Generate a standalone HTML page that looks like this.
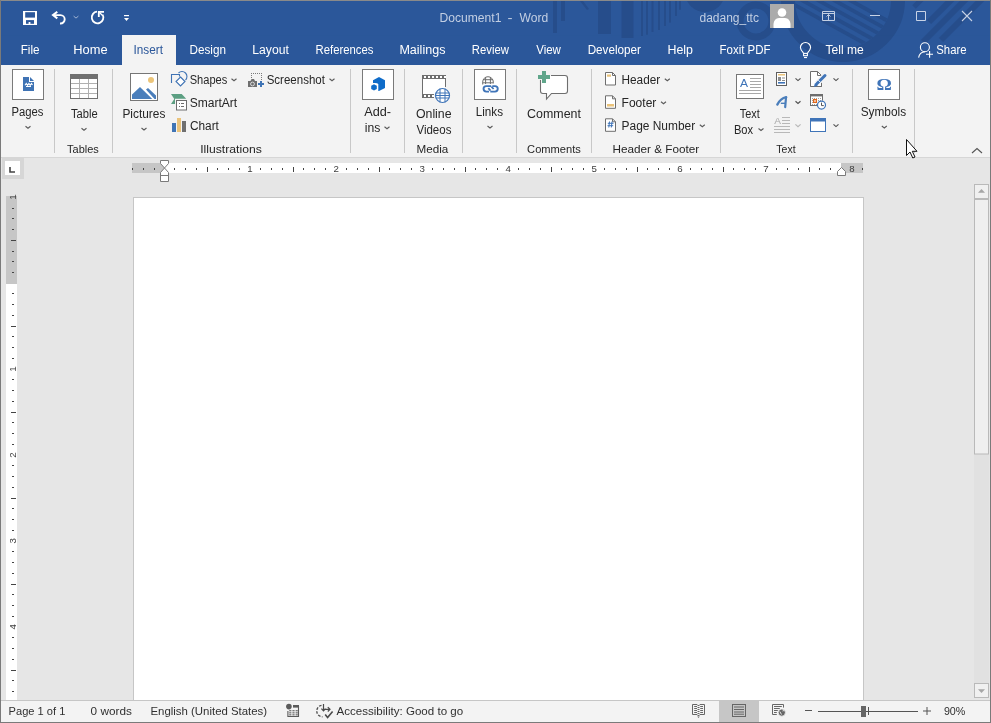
<!DOCTYPE html>
<html><head><meta charset="utf-8"><title>Document1 - Word</title>
<style>
html,body{margin:0;padding:0;width:991px;height:723px;overflow:hidden;background:#e6e6e6;font-family:"Liberation Sans",sans-serif;}
svg{display:block;will-change:transform;}
</style></head><body>
<svg width="991" height="723" viewBox="0 0 991 723" shape-rendering="auto">
<rect x="0" y="0" width="991" height="723" fill="#888888"/>
<rect x="1" y="1" width="989" height="64" fill="#2b579a"/>
<defs><clipPath id="tb"><rect x="1" y="1" width="989" height="64"/></clipPath><clipPath id="inner"><circle cx="843" cy="0" r="48"/></clipPath><clipPath id="rs"><circle cx="985" cy="-15" r="72"/></clipPath></defs>
<g clip-path="url(#tb)">
<rect x="553" y="0" width="4" height="33" fill="#264d8b"/>
<rect x="561" y="0" width="4" height="21" fill="#264d8b"/>
<rect x="598" y="0" width="13" height="34" fill="#264d8b"/>
<rect x="621.5" y="0" width="12" height="38" fill="#264d8b"/>
<rect x="641" y="0" width="2" height="36" fill="#264d8b"/>
<rect x="646" y="0" width="2" height="34.7" fill="#264d8b"/>
<rect x="651.5" y="0" width="2" height="32" fill="#264d8b"/>
<rect x="658" y="0" width="2" height="30" fill="#264d8b"/>
<rect x="664" y="0" width="2" height="26" fill="#264d8b"/>
<rect x="669" y="0" width="2" height="22.6" fill="#264d8b"/>
<rect x="675" y="0" width="2" height="16" fill="#264d8b"/>
<rect x="679" y="0" width="2" height="9.7" fill="#264d8b"/>
<path d="M580,1 L587,10 L589,9 L583,1 Z" fill="#264d8b" stroke="none" stroke-width="1"/>
<circle cx="705" cy="-8" r="20" fill="#264d8b"/>
<circle cx="756" cy="21" r="16" fill="none" stroke="#264d8b" stroke-width="7"/>
<circle cx="843" cy="0" r="55" fill="none" stroke="#264d8b" stroke-width="14"/>
<g clip-path="url(#inner)">
<path d="M782,-2 L872,47.5" fill="none" stroke="#264d8b" stroke-width="3.8"/>
<path d="M798,-2 L888,47.5" fill="none" stroke="#264d8b" stroke-width="3.8"/>
<path d="M814,-2 L904,47.5" fill="none" stroke="#264d8b" stroke-width="3.8"/>
<path d="M830,-2 L920,47.5" fill="none" stroke="#264d8b" stroke-width="3.8"/>
<path d="M846,-2 L936,47.5" fill="none" stroke="#264d8b" stroke-width="3.8"/>
</g>
<path d="M914,7 L923,-2" fill="none" stroke="#264d8b" stroke-width="5"/>
<path d="M929,22 L953,-2" fill="none" stroke="#264d8b" stroke-width="6"/>
<path d="M923,42 L967,-2" fill="none" stroke="#264d8b" stroke-width="6"/>
<path d="M941,40 L983,-2" fill="none" stroke="#264d8b" stroke-width="6"/>
</g>
<rect x="1" y="35" width="989" height="0.01" fill="#2b579a"/>
<rect x="122" y="35" width="54" height="30" fill="#f3f3f3"/>
<rect x="1" y="65" width="989" height="92" fill="#f3f3f3"/>
<rect x="1" y="157" width="989" height="1" fill="#d6d6d6"/>
<rect x="1" y="158" width="989" height="542" fill="#e6e6e6"/>
<rect x="1" y="700" width="989" height="1" fill="#c6c6c6"/>
<rect x="1" y="701" width="989" height="21" fill="#f3f3f3"/>
<rect x="23" y="11" width="14" height="14" fill="#ffffff"/>
<rect x="25.2" y="12.2" width="9.8" height="5.4" fill="#2b579a"/>
<rect x="26" y="20.1" width="8" height="3.7" fill="#2b579a"/>
<rect x="28.6" y="22" width="1.8" height="2" fill="#ffffff"/>
<path d="M57.3,11.8 L53,15.1 L57.3,18.4" fill="none" stroke="#ffffff" stroke-width="2"/>
<path d="M53.5,15.1 H60.5 A4.2,4.2 0 0 1 60.5,23.5 H60" fill="none" stroke="#ffffff" stroke-width="1.9"/>
<path d="M73.60,16.10 L76.00,18.10 L78.40,16.10" fill="none" stroke="#9fb3d3" stroke-width="1"/>
<path d="M102.6,14.6 A5.8,5.8 0 1 1 97,11.7" fill="none" stroke="#ffffff" stroke-width="1.8"/>
<path d="M98.8,17 V11.9 H104" fill="none" stroke="#ffffff" stroke-width="1.8" stroke-linejoin="miter"/>
<path d="M99,12 L102.5,15.5" fill="none" stroke="#ffffff" stroke-width="1.2"/>
<rect x="124" y="15" width="5" height="1.2" fill="#ffffff"/>
<path d="M124,18 H129 L126.5,21 Z" fill="#ffffff" stroke="none" stroke-width="1"/>
<text x="439.53" y="22" font-size="12" fill="#c3cfe3" textLength="61.90" lengthAdjust="spacingAndGlyphs" font-family='"Liberation Sans", sans-serif'>Document1</text>
<text x="507.62" y="22" font-size="12" fill="#c3cfe3" textLength="5.03" lengthAdjust="spacingAndGlyphs" font-family='"Liberation Sans", sans-serif'>-</text>
<text x="519.54" y="22" font-size="12" fill="#c3cfe3" textLength="28.66" lengthAdjust="spacingAndGlyphs" font-family='"Liberation Sans", sans-serif'>Word</text>
<text x="699.52" y="22" font-size="12" fill="#c3cfe3" textLength="59.37" lengthAdjust="spacingAndGlyphs" font-family='"Liberation Sans", sans-serif'>dadang_ttc</text>
<rect x="770" y="4" width="24" height="24" fill="#ababab"/>
<circle cx="782" cy="12.5" r="4.3" fill="#ffffff"/>
<path d="M773.5,28 V24 Q774,18.5 779,18 H785 Q790,18.5 790.5,24 V28 Z" fill="#ffffff" stroke="none" stroke-width="1"/>
<path d="M822.5,11.5 H834.5 V20.5 H822.5 Z M822.5,13.5 H834.5" fill="none" stroke="#c3cfe3" stroke-width="1"/>
<path d="M828.5,20 V14.5 M826.5,16.5 L828.5,14.5 L830.5,16.5" fill="none" stroke="#c3cfe3" stroke-width="1"/>
<rect x="870" y="15" width="10" height="1" fill="#c8d3e6"/>
<path d="M916.5,11.5 H925.5 V20.5 H916.5 Z" fill="none" stroke="#c8d3e6" stroke-width="1"/>
<path d="M962,11 L972,21 M972,11 L962,21" fill="none" stroke="#c8d3e6" stroke-width="1.1"/>
<text x="20.66" y="54" font-size="12" fill="#ffffff" textLength="18.88" lengthAdjust="spacingAndGlyphs" font-family='"Liberation Sans", sans-serif'>File</text>
<text x="73.27" y="54" font-size="12" fill="#ffffff" textLength="34.34" lengthAdjust="spacingAndGlyphs" font-family='"Liberation Sans", sans-serif'>Home</text>
<text x="189.56" y="54" font-size="12" fill="#ffffff" textLength="36.43" lengthAdjust="spacingAndGlyphs" font-family='"Liberation Sans", sans-serif'>Design</text>
<text x="252.22" y="54" font-size="12" fill="#ffffff" textLength="36.67" lengthAdjust="spacingAndGlyphs" font-family='"Liberation Sans", sans-serif'>Layout</text>
<text x="315.60" y="54" font-size="12" fill="#ffffff" textLength="57.79" lengthAdjust="spacingAndGlyphs" font-family='"Liberation Sans", sans-serif'>References</text>
<text x="399.40" y="54" font-size="12" fill="#ffffff" textLength="46.02" lengthAdjust="spacingAndGlyphs" font-family='"Liberation Sans", sans-serif'>Mailings</text>
<text x="471.80" y="54" font-size="12" fill="#ffffff" textLength="37.09" lengthAdjust="spacingAndGlyphs" font-family='"Liberation Sans", sans-serif'>Review</text>
<text x="536.24" y="54" font-size="12" fill="#ffffff" textLength="24.65" lengthAdjust="spacingAndGlyphs" font-family='"Liberation Sans", sans-serif'>View</text>
<text x="587.66" y="54" font-size="12" fill="#ffffff" textLength="53.35" lengthAdjust="spacingAndGlyphs" font-family='"Liberation Sans", sans-serif'>Developer</text>
<text x="667.51" y="54" font-size="12" fill="#ffffff" textLength="25.51" lengthAdjust="spacingAndGlyphs" font-family='"Liberation Sans", sans-serif'>Help</text>
<text x="719.58" y="54" font-size="12" fill="#ffffff" textLength="50.98" lengthAdjust="spacingAndGlyphs" font-family='"Liberation Sans", sans-serif'>Foxit PDF</text>
<text x="825.46" y="54" font-size="12" fill="#ffffff" textLength="38.22" lengthAdjust="spacingAndGlyphs" font-family='"Liberation Sans", sans-serif'>Tell me</text>
<text x="936.29" y="54" font-size="12" fill="#ffffff" textLength="30.26" lengthAdjust="spacingAndGlyphs" font-family='"Liberation Sans", sans-serif'>Share</text>
<text x="133.54" y="54" font-size="12" fill="#2b579a" textLength="29.43" lengthAdjust="spacingAndGlyphs" font-family='"Liberation Sans", sans-serif'>Insert</text>
<path d="M803.5,53 Q800.4,49.8 800.4,47.6 A5.1,5.1 0 0 1 810.6,47.6 Q810.6,49.8 807.5,53" fill="none" stroke="#ffffff" stroke-width="1.1"/>
<rect x="803.6" y="53.4" width="3.8" height="2.3" fill="none" stroke="#ffffff" stroke-width="1.1"/>
<rect x="804" y="57" width="3" height="1.1" fill="#ffffff"/>
<circle cx="924.9" cy="47.3" r="4.5" fill="none" stroke="#ffffff" stroke-width="1.1"/>
<path d="M918.6,57.6 Q919.5,52.2 925,51.8" fill="none" stroke="#ffffff" stroke-width="1.1"/>
<path d="M929.6,51 V57.7 M926,54.3 H933" fill="none" stroke="#ffffff" stroke-width="1.1"/>
<rect x="54.0" y="69" width="1" height="84" fill="#c8c8c8"/>
<rect x="112.0" y="69" width="1" height="84" fill="#c8c8c8"/>
<rect x="350.0" y="69" width="1" height="84" fill="#c8c8c8"/>
<rect x="404.0" y="69" width="1" height="84" fill="#c8c8c8"/>
<rect x="462.0" y="69" width="1" height="84" fill="#c8c8c8"/>
<rect x="516.0" y="69" width="1" height="84" fill="#c8c8c8"/>
<rect x="591.0" y="69" width="1" height="84" fill="#c8c8c8"/>
<rect x="720.0" y="69" width="1" height="84" fill="#c8c8c8"/>
<rect x="852.0" y="69" width="1" height="84" fill="#c8c8c8"/>
<rect x="914.0" y="69" width="1" height="84" fill="#c8c8c8"/>
<rect x="12.5" y="69.5" width="31" height="30" fill="#ffffff" stroke="#7a7a7a" stroke-width="1"/>
<path d="M23,77 H29 V82 H34 V91 H23 Z" fill="#3f73b4" stroke="none" stroke-width="1"/>
<path d="M30,77 L34,81 H30 Z" fill="#3f73b4" stroke="none" stroke-width="1"/>
<path d="M25,85.2 L26.3,83.4 L27.6,85.2 L28.9,83.4 L30.2,85.2 L31.5,83.4 L32.5,85" fill="none" stroke="#ffffff" stroke-width="1.1"/>
<rect x="26" y="86" width="5" height="1" fill="#ffffff"/>
<text x="11.50" y="116" font-size="12" fill="#262626" textLength="32.00" lengthAdjust="spacingAndGlyphs" font-family='"Liberation Sans", sans-serif'>Pages</text>
<path d="M25.50,126.30 L28.00,128.30 L30.50,126.30" fill="none" stroke="#5a5a5a" stroke-width="1.1"/>
<rect x="70.5" y="74.5" width="27" height="24" fill="#ffffff" stroke="#707070" stroke-width="1"/>
<rect x="70" y="74" width="28" height="5" fill="#707070"/>
<rect x="79.0" y="79" width="1" height="19" fill="#b0b0b0"/>
<rect x="88.0" y="79" width="1" height="19" fill="#b0b0b0"/>
<rect x="71" y="83.0" width="26" height="1" fill="#b0b0b0"/>
<rect x="71" y="88.0" width="26" height="1" fill="#b0b0b0"/>
<rect x="71" y="93.0" width="26" height="1" fill="#b0b0b0"/>
<text x="70.98" y="118" font-size="12" fill="#262626" textLength="26.73" lengthAdjust="spacingAndGlyphs" font-family='"Liberation Sans", sans-serif'>Table</text>
<path d="M81.50,128.30 L84.00,130.30 L86.50,128.30" fill="none" stroke="#5a5a5a" stroke-width="1.1"/>
<text x="67.08" y="153" font-size="10.8" fill="#262626" textLength="31.71" lengthAdjust="spacingAndGlyphs" font-family='"Liberation Sans", sans-serif'>Tables</text>
<rect x="130.5" y="73.5" width="27" height="27" fill="#ffffff" stroke="#767676" stroke-width="1"/>
<circle cx="151" cy="80" r="3" fill="#ecc57a"/>
<path d="M132,99 V94.5 L140,87 L152.3,99 Z" fill="#4a7ebb" stroke="none" stroke-width="1"/>
<path d="M146,89.5 L148,88 L156,95.5 V99 H154.5 Z" fill="#4a7ebb" stroke="none" stroke-width="1"/>
<text x="122.45" y="118" font-size="12" fill="#262626" textLength="42.89" lengthAdjust="spacingAndGlyphs" font-family='"Liberation Sans", sans-serif'>Pictures</text>
<path d="M141.50,128.00 L144.00,130.00 L146.50,128.00" fill="none" stroke="#5a5a5a" stroke-width="1.1"/>
<path d="M171.5,83 V74.5 H179.5 V76.5" fill="none" stroke="#3f73b4" stroke-width="1.1"/>
<path d="M178.5,73 A4.8,4.8 0 1 1 185.5,80" fill="none" stroke="#3f73b4" stroke-width="1.1"/>
<path d="M180.5,77 L185,81.5 L180.5,86 L176,81.5 Z" fill="#ffffff" stroke="#3f73b4" stroke-width="1.1"/>
<text x="189.70" y="84" font-size="12" fill="#262626" textLength="37.61" lengthAdjust="spacingAndGlyphs" font-family='"Liberation Sans", sans-serif'>Shapes</text>
<path d="M231.50,78.80 L234.00,80.80 L236.50,78.80" fill="none" stroke="#5a5a5a" stroke-width="1.1"/>
<path d="M171,94 H181.7 L186.2,98.7 H175 V104 H171 L174.3,99 Z" fill="#5c9f82" stroke="none" stroke-width="1"/>
<rect x="176.5" y="100.5" width="10" height="9.5" fill="#ffffff" stroke="#6e6e6e" stroke-width="1"/>
<rect x="179" y="103" width="1" height="1" fill="#6e6e6e"/>
<rect x="181" y="103" width="3" height="1" fill="#6e6e6e"/>
<rect x="179" y="106" width="1" height="1" fill="#6e6e6e"/>
<rect x="181" y="106" width="3" height="1" fill="#6e6e6e"/>
<text x="189.66" y="107" font-size="12" fill="#262626" textLength="47.46" lengthAdjust="spacingAndGlyphs" font-family='"Liberation Sans", sans-serif'>SmartArt</text>
<rect x="172" y="123" width="4" height="9" fill="#3f74b5"/>
<rect x="177" y="118" width="4" height="14" fill="#eac37b"/>
<rect x="182" y="121" width="4" height="11" fill="#6f6f6f"/>
<text x="189.91" y="130" font-size="12" fill="#262626" textLength="28.96" lengthAdjust="spacingAndGlyphs" font-family='"Liberation Sans", sans-serif'>Chart</text>
<rect x="251" y="73" width="1" height="1" fill="#7a7a7a"/>
<rect x="253" y="73" width="1" height="1" fill="#7a7a7a"/>
<rect x="255" y="73" width="1" height="1" fill="#7a7a7a"/>
<rect x="257" y="73" width="1" height="1" fill="#7a7a7a"/>
<rect x="259" y="73" width="1" height="1" fill="#7a7a7a"/>
<rect x="261" y="73" width="1" height="1" fill="#7a7a7a"/>
<rect x="251" y="75" width="1" height="1" fill="#7a7a7a"/>
<rect x="251" y="77" width="1" height="1" fill="#7a7a7a"/>
<rect x="261" y="75" width="1" height="1" fill="#7a7a7a"/>
<rect x="261" y="77" width="1" height="1" fill="#7a7a7a"/>
<rect x="261" y="79" width="1" height="1" fill="#7a7a7a"/>
<path d="M248,81 H250.5 L251.5,79 H254 L255,81 H257 V87 H248 Z" fill="#6f6f6f" stroke="none" stroke-width="1"/>
<circle cx="252.5" cy="84" r="1.9" fill="none" stroke="#dddddd" stroke-width="1"/>
<rect x="258" y="83" width="6" height="2" fill="#3f74b5"/>
<rect x="260" y="81" width="2" height="6" fill="#3f74b5"/>
<text x="266.68" y="84" font-size="12" fill="#262626" textLength="58.22" lengthAdjust="spacingAndGlyphs" font-family='"Liberation Sans", sans-serif'>Screenshot</text>
<path d="M329.50,78.80 L332.00,80.80 L334.50,78.80" fill="none" stroke="#5a5a5a" stroke-width="1.1"/>
<text x="200.20" y="153" font-size="10.8" fill="#262626" textLength="61.59" lengthAdjust="spacingAndGlyphs" font-family='"Liberation Sans", sans-serif'>Illustrations</text>
<rect x="362.5" y="69.5" width="31" height="30" fill="#ffffff" stroke="#7a7a7a" stroke-width="1"/>
<path d="M379,77 L385,80.3 V88 L379,91 H378.3 V84 Q377.5,83 375,83 H373 V80.3 Z" fill="#0f6cc9" stroke="none" stroke-width="1"/>
<path d="M374,84.2 L376.8,85.8 V89 L374,90.6 L371.2,89 V85.8 Z" fill="#0f6cc9" stroke="none" stroke-width="1"/>
<text x="364.20" y="116" font-size="12" fill="#262626" textLength="26.84" lengthAdjust="spacingAndGlyphs" font-family='"Liberation Sans", sans-serif'>Add-</text>
<text x="364.81" y="132" font-size="12" fill="#262626" textLength="15.60" lengthAdjust="spacingAndGlyphs" font-family='"Liberation Sans", sans-serif'>ins</text>
<path d="M384.50,126.80 L387.00,128.80 L389.50,126.80" fill="none" stroke="#5a5a5a" stroke-width="1.1"/>
<rect x="422" y="75" width="24" height="4" fill="#6e6e6e"/>
<rect x="424" y="76" width="2" height="2" fill="#ffffff"/>
<rect x="428" y="76" width="2" height="2" fill="#ffffff"/>
<rect x="432" y="76" width="2" height="2" fill="#ffffff"/>
<rect x="436" y="76" width="2" height="2" fill="#ffffff"/>
<rect x="440" y="76" width="2" height="2" fill="#ffffff"/>
<rect x="444" y="76" width="2" height="2" fill="#ffffff"/>
<rect x="422" y="79" width="1" height="15" fill="#6e6e6e"/>
<rect x="445" y="79" width="1" height="8" fill="#6e6e6e"/>
<rect x="423" y="79" width="22" height="15" fill="#ffffff"/>
<rect x="422" y="94" width="12" height="4" fill="#6e6e6e"/>
<rect x="424" y="95" width="2" height="2" fill="#ffffff"/>
<rect x="428" y="95" width="2" height="2" fill="#ffffff"/>
<rect x="432" y="95" width="2" height="2" fill="#ffffff"/>
<circle cx="442.5" cy="95.5" r="7" fill="#ffffff" stroke="#3f74b8" stroke-width="1.2"/>
<path d="M440,88.8 V102.2 M445,88.8 V102.2 M435.8,93 H449.2 M435.5,95.5 H449.5 M435.8,98 H449.2" fill="none" stroke="#3f74b8" stroke-width="1"/>
<text x="415.95" y="118" font-size="12" fill="#262626" textLength="35.62" lengthAdjust="spacingAndGlyphs" font-family='"Liberation Sans", sans-serif'>Online</text>
<text x="416.44" y="134" font-size="12" fill="#262626" textLength="34.96" lengthAdjust="spacingAndGlyphs" font-family='"Liberation Sans", sans-serif'>Videos</text>
<text x="416.47" y="153" font-size="10.8" fill="#262626" textLength="31.82" lengthAdjust="spacingAndGlyphs" font-family='"Liberation Sans", sans-serif'>Media</text>
<rect x="474.5" y="69.5" width="31" height="30" fill="#ffffff" stroke="#7a7a7a" stroke-width="1"/>
<path d="M482.7,84.5 V82 A5.3,5.3 0 0 1 493.3,82 V83.5" fill="none" stroke="#6e6e6e" stroke-width="1"/>
<path d="M483,79.7 H493 M483,82.8 H493 M485.6,77.3 V84 M490.4,77.3 V84" fill="none" stroke="#6e6e6e" stroke-width="1"/>
<path d="M491.2,86.1 H486.3 A2.75,2.75 0 0 0 486.3,91.6 H489" fill="none" stroke="#3f74b8" stroke-width="1.9"/>
<path d="M490.3,91.6 H495 A2.75,2.75 0 0 0 495,86.1 H492.3" fill="none" stroke="#3f74b8" stroke-width="1.9"/>
<path d="M488.3,88.2 L490.5,90.6" fill="none" stroke="#3f74b8" stroke-width="1.8"/>
<path d="M491.4,86.7 L493.6,89" fill="none" stroke="#3f74b8" stroke-width="1.8"/>
<text x="475.77" y="116" font-size="12" fill="#262626" textLength="27.24" lengthAdjust="spacingAndGlyphs" font-family='"Liberation Sans", sans-serif'>Links</text>
<path d="M487.50,126.00 L490.00,128.00 L492.50,126.00" fill="none" stroke="#5a5a5a" stroke-width="1.1"/>
<path d="M551,75.5 H565 A2.5,2.5 0 0 1 567.5,78 V91 A2.5,2.5 0 0 1 565,93.5 H551.5 L546.5,99 V93.5 H543 A2.5,2.5 0 0 1 540.5,91 V80" fill="#ffffff" stroke="#6e6e6e" stroke-width="1.1"/>
<rect x="542" y="71" width="4" height="12" fill="#60a68b"/>
<rect x="538" y="75" width="12" height="4" fill="#60a68b"/>
<text x="527.08" y="118" font-size="12" fill="#262626" textLength="53.84" lengthAdjust="spacingAndGlyphs" font-family='"Liberation Sans", sans-serif'>Comment</text>
<text x="527.14" y="153" font-size="10.8" fill="#262626" textLength="53.74" lengthAdjust="spacingAndGlyphs" font-family='"Liberation Sans", sans-serif'>Comments</text>
<path d="M605.5,72.5 H612.5 L615.5,75.5 V85 H605.5 Z" fill="#ffffff" stroke="#6e6e6e" stroke-width="1"/>
<path d="M612.5,72.5 V75.5 H615.5" fill="none" stroke="#6e6e6e" stroke-width="1"/>
<rect x="607" y="74.5" width="4" height="2.2" fill="#eac37b"/>
<text x="621.56" y="84" font-size="12" fill="#262626" textLength="38.68" lengthAdjust="spacingAndGlyphs" font-family='"Liberation Sans", sans-serif'>Header</text>
<path d="M664.80,78.80 L667.30,80.80 L669.80,78.80" fill="none" stroke="#5a5a5a" stroke-width="1.1"/>
<path d="M605.5,95.8 H612.5 L615.5,98.8 V108.3 H605.5 Z" fill="#ffffff" stroke="#6e6e6e" stroke-width="1"/>
<path d="M612.5,95.8 V98.8 H615.5" fill="none" stroke="#6e6e6e" stroke-width="1"/>
<rect x="607" y="104" width="7" height="2.5" fill="#eac37b"/>
<text x="621.54" y="107" font-size="12" fill="#262626" textLength="34.81" lengthAdjust="spacingAndGlyphs" font-family='"Liberation Sans", sans-serif'>Footer</text>
<path d="M661.00,101.80 L663.50,103.80 L666.00,101.80" fill="none" stroke="#5a5a5a" stroke-width="1.1"/>
<path d="M605.5,118.8 H612.5 L615.5,121.8 V131.3 H605.5 Z" fill="#ffffff" stroke="#6e6e6e" stroke-width="1"/>
<path d="M612.5,118.8 V121.8 H615.5" fill="none" stroke="#6e6e6e" stroke-width="1"/>
<path d="M609.5,121.5 L608.8,127.5 M612,121.5 L611.3,127.5 M607.8,123.3 H613.5 M607.5,125.7 H613.2" fill="none" stroke="#3f74b8" stroke-width="1"/>
<text x="621.54" y="130" font-size="12" fill="#262626" textLength="73.70" lengthAdjust="spacingAndGlyphs" font-family='"Liberation Sans", sans-serif'>Page Number</text>
<path d="M699.80,124.80 L702.30,126.80 L704.80,124.80" fill="none" stroke="#5a5a5a" stroke-width="1.1"/>
<text x="612.46" y="153" font-size="10.8" fill="#262626" textLength="86.75" lengthAdjust="spacingAndGlyphs" font-family='"Liberation Sans", sans-serif'>Header &amp; Footer</text>
<rect x="736.5" y="74.5" width="27" height="24" fill="#ffffff" stroke="#767676" stroke-width="1"/>
<text x="740.00" y="87" font-size="11.5" fill="#3f74b8" textLength="8.02" lengthAdjust="spacingAndGlyphs" font-family='"Liberation Sans", sans-serif'>A</text>
<rect x="750" y="78.0" width="11" height="1" fill="#a8a8a8"/>
<rect x="750" y="81.0" width="11" height="1" fill="#a8a8a8"/>
<rect x="750" y="84.0" width="11" height="1" fill="#a8a8a8"/>
<rect x="750" y="87.0" width="11" height="1" fill="#a8a8a8"/>
<rect x="739" y="90.0" width="22" height="1" fill="#a8a8a8"/>
<rect x="739" y="93.0" width="22" height="1" fill="#a8a8a8"/>
<text x="739.68" y="118" font-size="12" fill="#262626" textLength="20.02" lengthAdjust="spacingAndGlyphs" font-family='"Liberation Sans", sans-serif'>Text</text>
<text x="733.91" y="134" font-size="12" fill="#262626" textLength="19.18" lengthAdjust="spacingAndGlyphs" font-family='"Liberation Sans", sans-serif'>Box</text>
<path d="M758.50,128.50 L761.00,130.50 L763.50,128.50" fill="none" stroke="#5a5a5a" stroke-width="1.1"/>
<rect x="776.5" y="72.5" width="10" height="13" fill="#ffffff" stroke="#5f5f5f" stroke-width="1"/>
<rect x="778" y="74" width="7" height="1.5" fill="#eac37b"/>
<rect x="778" y="77" width="3" height="4" fill="#8c8c8c"/>
<rect x="782" y="77.5" width="3" height="1" fill="#8c8c8c"/>
<rect x="782" y="80" width="3" height="1" fill="#8c8c8c"/>
<rect x="778" y="82" width="7" height="1.6" fill="#3f74b8"/>
<path d="M795.50,78.40 L798.00,80.60 L800.50,78.40" fill="none" stroke="#505050" stroke-width="1.15"/>
<path d="M777.3,104.6 Q780.5,98.5 786.2,97.2" fill="none" stroke="#4a7ebb" stroke-width="2.3" stroke-linecap="round"/>
<path d="M786,97.5 L785.2,107.2" fill="none" stroke="#4a7ebb" stroke-width="2.2" stroke-linecap="round"/>
<path d="M780.8,103.3 H785.5" fill="none" stroke="#4a7ebb" stroke-width="1.4"/>
<path d="M795.50,101.20 L798.00,103.40 L800.50,101.20" fill="none" stroke="#505050" stroke-width="1.15"/>
<text x="774.30" y="123.5" font-size="9" fill="#a8a8a8" textLength="6.72" lengthAdjust="spacingAndGlyphs" font-family='"Liberation Sans", sans-serif'>A</text>
<rect x="782" y="117.0" width="8" height="1" fill="#b8b8b8"/>
<rect x="782" y="120.0" width="8" height="1" fill="#b8b8b8"/>
<rect x="782" y="123.0" width="8" height="1" fill="#b8b8b8"/>
<rect x="774" y="126.0" width="16" height="1" fill="#b8b8b8"/>
<rect x="774" y="129.0" width="16" height="1" fill="#b8b8b8"/>
<rect x="774" y="132.0" width="16" height="1" fill="#b8b8b8"/>
<path d="M795.40,124.40 L798.00,126.60 L800.60,124.40" fill="none" stroke="#b8b8b8" stroke-width="1.2"/>
<path d="M810.5,71.5 H817.5 L821.5,75.5 V86.5 H810.5 Z" fill="#ffffff" stroke="#6e6e6e" stroke-width="1" stroke-linejoin="miter"/>
<path d="M817.5,71.5 V75.5 H821.5" fill="none" stroke="#6e6e6e" stroke-width="1"/>
<path d="M815.5,85 L825,75.5" fill="none" stroke="#f3f3f3" stroke-width="5.5" stroke-linecap="round"/>
<rect x="811" y="82" width="10" height="4" fill="#ffffff"/>
<path d="M821.5,83 V86.5 H810.5" fill="none" stroke="#6e6e6e" stroke-width="1"/>
<path d="M816.8,83.7 L825,75.5" fill="none" stroke="#3f74b8" stroke-width="3" stroke-linecap="round"/>
<path d="M813.8,87 L815,83 L817.8,85.8 Z" fill="#3f74b8" stroke="none" stroke-width="1"/>
<path d="M818.3,80.2 L820.3,82.2" fill="none" stroke="#ffffff" stroke-width="0.9"/>
<path d="M833.50,78.40 L836.00,80.60 L838.50,78.40" fill="none" stroke="#505050" stroke-width="1.15"/>
<rect x="810.5" y="96" width="12" height="9.5" fill="#ffffff"/>
<rect x="812" y="98" width="1" height="1" fill="#a0a0a0"/>
<rect x="814" y="98" width="1" height="1" fill="#a0a0a0"/>
<rect x="816" y="98" width="1" height="1" fill="#a0a0a0"/>
<rect x="818" y="98" width="1" height="1" fill="#a0a0a0"/>
<rect x="820" y="98" width="1" height="1" fill="#a0a0a0"/>
<rect x="822" y="98" width="1" height="1" fill="#a0a0a0"/>
<rect x="812" y="100" width="1" height="1" fill="#a0a0a0"/>
<rect x="814" y="100" width="1" height="1" fill="#a0a0a0"/>
<rect x="816" y="100" width="1" height="1" fill="#a0a0a0"/>
<rect x="818" y="100" width="1" height="1" fill="#a0a0a0"/>
<rect x="820" y="100" width="1" height="1" fill="#a0a0a0"/>
<rect x="822" y="100" width="1" height="1" fill="#a0a0a0"/>
<rect x="812" y="102" width="1" height="1" fill="#a0a0a0"/>
<rect x="814" y="102" width="1" height="1" fill="#a0a0a0"/>
<rect x="816" y="102" width="1" height="1" fill="#a0a0a0"/>
<rect x="818" y="102" width="1" height="1" fill="#a0a0a0"/>
<rect x="820" y="102" width="1" height="1" fill="#a0a0a0"/>
<rect x="822" y="102" width="1" height="1" fill="#a0a0a0"/>
<rect x="812" y="104" width="1" height="1" fill="#a0a0a0"/>
<rect x="814" y="104" width="1" height="1" fill="#a0a0a0"/>
<rect x="816" y="104" width="1" height="1" fill="#a0a0a0"/>
<rect x="818" y="104" width="1" height="1" fill="#a0a0a0"/>
<rect x="820" y="104" width="1" height="1" fill="#a0a0a0"/>
<rect x="822" y="104" width="1" height="1" fill="#a0a0a0"/>
<rect x="810" y="94" width="13" height="2.4" fill="#6e6e6e"/>
<rect x="810" y="96" width="1" height="10" fill="#6e6e6e"/>
<rect x="810" y="105" width="8" height="1" fill="#6e6e6e"/>
<rect x="822" y="96" width="1" height="4" fill="#6e6e6e"/>
<rect x="813.6" y="99.6" width="2.8" height="2.8" fill="#ffffff" stroke="#e0661a" stroke-width="1.3"/>
<circle cx="821.5" cy="105.1" r="4.0" fill="#ffffff" stroke="#3f74b8" stroke-width="1.2"/>
<path d="M821.5,102.6 V105.6 H823.8" fill="none" stroke="#555555" stroke-width="1"/>
<rect x="810.5" y="118.5" width="15" height="13" fill="#ffffff" stroke="#3f74b8" stroke-width="1"/>
<rect x="810" y="118" width="16" height="3.5" fill="#3f74b8"/>
<path d="M833.50,124.40 L836.00,126.60 L838.50,124.40" fill="none" stroke="#505050" stroke-width="1.15"/>
<text x="776.29" y="153" font-size="10.8" fill="#262626" textLength="19.31" lengthAdjust="spacingAndGlyphs" font-family='"Liberation Sans", sans-serif'>Text</text>
<rect x="868.5" y="69.5" width="31" height="30" fill="#ffffff" stroke="#7a7a7a" stroke-width="1"/>
<text x="876.54" y="90" font-size="16" fill="#3f74b8" textLength="15.34" lengthAdjust="spacingAndGlyphs" font-family='"Liberation Serif", serif' font-weight="bold">Ω</text>
<text x="860.67" y="116" font-size="12" fill="#262626" textLength="45.44" lengthAdjust="spacingAndGlyphs" font-family='"Liberation Sans", sans-serif'>Symbols</text>
<path d="M881.80,126.00 L884.30,128.00 L886.80,126.00" fill="none" stroke="#5a5a5a" stroke-width="1.1"/>
<path d="M972,153 L977,148.5 L982,153" fill="none" stroke="#555555" stroke-width="1.1"/>
<rect x="2" y="158" width="22" height="21" fill="#d6d6d6"/>
<rect x="5" y="161" width="15" height="14" fill="#ffffff"/>
<path d="M10,167 V172 H15" fill="none" stroke="#444444" stroke-width="1.6"/>
<rect x="132" y="163" width="731" height="10" fill="#ffffff"/>
<rect x="132" y="163" width="32.5" height="10" fill="#c6c6c6"/>
<rect x="841" y="163" width="22" height="10" fill="#c6c6c6"/>
<rect x="132" y="168" width="1" height="2" fill="#444444"/>
<rect x="143" y="168" width="1" height="2" fill="#444444"/>
<rect x="154" y="168" width="1" height="2" fill="#444444"/>
<rect x="174" y="168" width="1" height="2" fill="#444444"/>
<rect x="185" y="168" width="1" height="2" fill="#444444"/>
<rect x="196" y="168" width="1" height="2" fill="#444444"/>
<rect x="207" y="167" width="1" height="5" fill="#444444"/>
<rect x="217" y="168" width="1" height="2" fill="#444444"/>
<rect x="228" y="168" width="1" height="2" fill="#444444"/>
<rect x="239" y="168" width="1" height="2" fill="#444444"/>
<text x="247.35" y="172" font-size="9.7" fill="#3c3c3c" font-family='"Liberation Sans", sans-serif'>1</text>
<rect x="260" y="168" width="1" height="2" fill="#444444"/>
<rect x="271" y="168" width="1" height="2" fill="#444444"/>
<rect x="282" y="168" width="1" height="2" fill="#444444"/>
<rect x="293" y="167" width="1" height="5" fill="#444444"/>
<rect x="303" y="168" width="1" height="2" fill="#444444"/>
<rect x="314" y="168" width="1" height="2" fill="#444444"/>
<rect x="325" y="168" width="1" height="2" fill="#444444"/>
<text x="333.47" y="172" font-size="9.7" fill="#3c3c3c" font-family='"Liberation Sans", sans-serif'>2</text>
<rect x="346" y="168" width="1" height="2" fill="#444444"/>
<rect x="357" y="168" width="1" height="2" fill="#444444"/>
<rect x="368" y="168" width="1" height="2" fill="#444444"/>
<rect x="379" y="167" width="1" height="5" fill="#444444"/>
<rect x="389" y="168" width="1" height="2" fill="#444444"/>
<rect x="400" y="168" width="1" height="2" fill="#444444"/>
<rect x="411" y="168" width="1" height="2" fill="#444444"/>
<text x="419.44" y="172" font-size="9.7" fill="#3c3c3c" font-family='"Liberation Sans", sans-serif'>3</text>
<rect x="432" y="168" width="1" height="2" fill="#444444"/>
<rect x="443" y="168" width="1" height="2" fill="#444444"/>
<rect x="454" y="168" width="1" height="2" fill="#444444"/>
<rect x="465" y="167" width="1" height="5" fill="#444444"/>
<rect x="475" y="168" width="1" height="2" fill="#444444"/>
<rect x="486" y="168" width="1" height="2" fill="#444444"/>
<rect x="497" y="168" width="1" height="2" fill="#444444"/>
<text x="505.46" y="172" font-size="9.7" fill="#3c3c3c" font-family='"Liberation Sans", sans-serif'>4</text>
<rect x="518" y="168" width="1" height="2" fill="#444444"/>
<rect x="529" y="168" width="1" height="2" fill="#444444"/>
<rect x="540" y="168" width="1" height="2" fill="#444444"/>
<rect x="551" y="167" width="1" height="5" fill="#444444"/>
<rect x="561" y="168" width="1" height="2" fill="#444444"/>
<rect x="572" y="168" width="1" height="2" fill="#444444"/>
<rect x="583" y="168" width="1" height="2" fill="#444444"/>
<text x="591.39" y="172" font-size="9.7" fill="#3c3c3c" font-family='"Liberation Sans", sans-serif'>5</text>
<rect x="604" y="168" width="1" height="2" fill="#444444"/>
<rect x="615" y="168" width="1" height="2" fill="#444444"/>
<rect x="626" y="168" width="1" height="2" fill="#444444"/>
<rect x="637" y="167" width="1" height="5" fill="#444444"/>
<rect x="647" y="168" width="1" height="2" fill="#444444"/>
<rect x="658" y="168" width="1" height="2" fill="#444444"/>
<rect x="669" y="168" width="1" height="2" fill="#444444"/>
<text x="677.31" y="172" font-size="9.7" fill="#3c3c3c" font-family='"Liberation Sans", sans-serif'>6</text>
<rect x="690" y="168" width="1" height="2" fill="#444444"/>
<rect x="701" y="168" width="1" height="2" fill="#444444"/>
<rect x="712" y="168" width="1" height="2" fill="#444444"/>
<rect x="723" y="167" width="1" height="5" fill="#444444"/>
<rect x="733" y="168" width="1" height="2" fill="#444444"/>
<rect x="744" y="168" width="1" height="2" fill="#444444"/>
<rect x="755" y="168" width="1" height="2" fill="#444444"/>
<text x="763.33" y="172" font-size="9.7" fill="#3c3c3c" font-family='"Liberation Sans", sans-serif'>7</text>
<rect x="776" y="168" width="1" height="2" fill="#444444"/>
<rect x="787" y="168" width="1" height="2" fill="#444444"/>
<rect x="798" y="168" width="1" height="2" fill="#444444"/>
<rect x="809" y="167" width="1" height="5" fill="#444444"/>
<rect x="819" y="168" width="1" height="2" fill="#444444"/>
<rect x="830" y="168" width="1" height="2" fill="#444444"/>
<rect x="841" y="168" width="1" height="2" fill="#444444"/>
<text x="849.28" y="172" font-size="9.7" fill="#3c3c3c" font-family='"Liberation Sans", sans-serif'>8</text>
<rect x="862" y="168" width="1" height="2" fill="#444444"/>
<path d="M160.5,160.5 H168.5 V163.5 L164.5,168 L168.5,172.5 V181.5 H160.5 V172.5 L164.5,168 L160.5,163.5 Z" fill="#ffffff" stroke="#7a7a7a" stroke-width="1"/>
<path d="M160.5,175.5 H168.5" fill="none" stroke="#7a7a7a" stroke-width="1"/>
<path d="M837.5,175.5 V171.5 L841.5,167.5 L845.5,171.5 V175.5 Z" fill="#ffffff" stroke="#7a7a7a" stroke-width="1"/>
<rect x="6" y="196" width="11" height="504" fill="#ffffff"/>
<rect x="6" y="196" width="11" height="88" fill="#c6c6c6"/>
<g transform="translate(15.7,197.03) rotate(-90)">
<text x="-2.84" y="0" font-size="9.7" fill="#3c3c3c" font-family='"Liberation Sans", sans-serif'>1</text>
</g>
<rect x="12" y="208" width="2" height="1" fill="#444444"/>
<rect x="12" y="218" width="2" height="1" fill="#444444"/>
<rect x="12" y="229" width="2" height="1" fill="#444444"/>
<rect x="11" y="240" width="5" height="1" fill="#444444"/>
<rect x="12" y="251" width="2" height="1" fill="#444444"/>
<rect x="12" y="261" width="2" height="1" fill="#444444"/>
<rect x="12" y="272" width="2" height="1" fill="#444444"/>
<rect x="12" y="293" width="2" height="1" fill="#444444"/>
<rect x="12" y="304" width="2" height="1" fill="#444444"/>
<rect x="12" y="315" width="2" height="1" fill="#444444"/>
<rect x="11" y="326" width="5" height="1" fill="#444444"/>
<rect x="12" y="336" width="2" height="1" fill="#444444"/>
<rect x="12" y="347" width="2" height="1" fill="#444444"/>
<rect x="12" y="358" width="2" height="1" fill="#444444"/>
<g transform="translate(15.7,368.97) rotate(-90)">
<text x="-2.84" y="0" font-size="9.7" fill="#3c3c3c" font-family='"Liberation Sans", sans-serif'>1</text>
</g>
<rect x="12" y="379" width="2" height="1" fill="#444444"/>
<rect x="12" y="390" width="2" height="1" fill="#444444"/>
<rect x="12" y="401" width="2" height="1" fill="#444444"/>
<rect x="11" y="412" width="5" height="1" fill="#444444"/>
<rect x="12" y="422" width="2" height="1" fill="#444444"/>
<rect x="12" y="433" width="2" height="1" fill="#444444"/>
<rect x="12" y="444" width="2" height="1" fill="#444444"/>
<g transform="translate(15.7,454.94) rotate(-90)">
<text x="-2.69" y="0" font-size="9.7" fill="#3c3c3c" font-family='"Liberation Sans", sans-serif'>2</text>
</g>
<rect x="12" y="465" width="2" height="1" fill="#444444"/>
<rect x="12" y="476" width="2" height="1" fill="#444444"/>
<rect x="12" y="487" width="2" height="1" fill="#444444"/>
<rect x="11" y="498" width="5" height="1" fill="#444444"/>
<rect x="12" y="508" width="2" height="1" fill="#444444"/>
<rect x="12" y="519" width="2" height="1" fill="#444444"/>
<rect x="12" y="530" width="2" height="1" fill="#444444"/>
<g transform="translate(15.7,540.92) rotate(-90)">
<text x="-2.69" y="0" font-size="9.7" fill="#3c3c3c" font-family='"Liberation Sans", sans-serif'>3</text>
</g>
<rect x="12" y="551" width="2" height="1" fill="#444444"/>
<rect x="12" y="562" width="2" height="1" fill="#444444"/>
<rect x="12" y="573" width="2" height="1" fill="#444444"/>
<rect x="11" y="584" width="5" height="1" fill="#444444"/>
<rect x="12" y="594" width="2" height="1" fill="#444444"/>
<rect x="12" y="605" width="2" height="1" fill="#444444"/>
<rect x="12" y="616" width="2" height="1" fill="#444444"/>
<g transform="translate(15.7,626.89) rotate(-90)">
<text x="-2.64" y="0" font-size="9.7" fill="#3c3c3c" font-family='"Liberation Sans", sans-serif'>4</text>
</g>
<rect x="12" y="637" width="2" height="1" fill="#444444"/>
<rect x="12" y="648" width="2" height="1" fill="#444444"/>
<rect x="12" y="659" width="2" height="1" fill="#444444"/>
<rect x="11" y="670" width="5" height="1" fill="#444444"/>
<rect x="12" y="680" width="2" height="1" fill="#444444"/>
<rect x="12" y="691" width="2" height="1" fill="#444444"/>
<rect x="133.5" y="197.5" width="730" height="530" fill="#ffffff" stroke="#c6c6c6" stroke-width="1"/>
<rect x="1" y="700" width="989" height="1" fill="#c6c6c6"/>
<rect x="1" y="701" width="989" height="21" fill="#f3f3f3"/>
<rect x="974" y="184" width="15" height="514" fill="#e1e1e1"/>
<rect x="974.5" y="184.5" width="14" height="14" fill="#f0f0f0" stroke="#b9b9b9" stroke-width="1"/>
<path d="M978,192.8 L981.5,189 L985,192.8 Z" fill="#a6a6a6" stroke="none" stroke-width="1"/>
<rect x="974.5" y="199.5" width="14" height="254.5" fill="#efefef" stroke="#b9b9b9" stroke-width="1"/>
<rect x="974.5" y="683.5" width="14" height="14" fill="#f0f0f0" stroke="#b9b9b9" stroke-width="1"/>
<path d="M978,689.2 L981.5,693 L985,689.2 Z" fill="#a6a6a6" stroke="none" stroke-width="1"/>
<path d="M906.5,139.5 V155.5 L910,152 L912.8,158 L915,157 L912.3,151.3 H917 Z" fill="#ffffff" stroke="#111111" stroke-width="1"/>
<text x="8.61" y="715" font-size="11" fill="#303030" textLength="56.79" lengthAdjust="spacingAndGlyphs" font-family='"Liberation Sans", sans-serif'>Page 1 of 1</text>
<text x="90.63" y="715" font-size="11" fill="#303030" textLength="41.20" lengthAdjust="spacingAndGlyphs" font-family='"Liberation Sans", sans-serif'>0 words</text>
<text x="150.49" y="715" font-size="11" fill="#303030" textLength="116.62" lengthAdjust="spacingAndGlyphs" font-family='"Liberation Sans", sans-serif'>English (United States)</text>
<circle cx="288.9" cy="706.6" r="2.8" fill="#5a5a5a"/>
<rect x="293" y="705" width="6" height="2.6" fill="#5a5a5a"/>
<path d="M287.9,711 V716.5 H298.5 V706" fill="none" stroke="#5a5a5a" stroke-width="1.1"/>
<rect x="289.2" y="710.2" width="2.2" height="1.1" fill="#5a5a5a"/>
<rect x="292.4" y="710.2" width="2.2" height="1.1" fill="#5a5a5a"/>
<rect x="295.6" y="710.2" width="2.2" height="1.1" fill="#5a5a5a"/>
<rect x="289.2" y="712.3" width="2.2" height="1.1" fill="#5a5a5a"/>
<rect x="292.4" y="712.3" width="2.2" height="1.1" fill="#5a5a5a"/>
<rect x="295.6" y="712.3" width="2.2" height="1.1" fill="#5a5a5a"/>
<rect x="289.2" y="714.3" width="2.2" height="1.1" fill="#5a5a5a"/>
<rect x="292.4" y="714.3" width="2.2" height="1.1" fill="#5a5a5a"/>
<rect x="295.6" y="714.3" width="2.2" height="1.1" fill="#5a5a5a"/>
<path d="M321.5,705.3 A5.8,5.8 0 0 0 322.5,716.8" fill="none" stroke="#4a4a4a" stroke-width="1.35" stroke-dasharray="2.6,1.4"/>
<path d="M323.5,704 V710.8 M321.4,708.6 L323.5,710.8 L325.6,708.6 M323.8,709.3 H330 M327.8,707.1 L330,709.3 L327.8,711.5" fill="none" stroke="#4a4a4a" stroke-width="1.2"/>
<path d="M325.2,714.6 L327.6,717.6 L332.6,711.6" fill="none" stroke="#4a4a4a" stroke-width="1.6"/>
<text x="336.50" y="715" font-size="11" fill="#303030" textLength="126.66" lengthAdjust="spacingAndGlyphs" font-family='"Liberation Sans", sans-serif'>Accessibility: Good to go</text>
<rect x="719" y="701" width="40" height="21" fill="#c6c6c6"/>
<path d="M697.3,704.5 H692.5 V714.5 H697.3 M699.7,704.5 H704.5 V714.5 H699.7" fill="none" stroke="#666666" stroke-width="1"/>
<rect x="697.5" y="705" width="2" height="1" fill="#666666"/>
<rect x="697.5" y="707" width="2" height="1" fill="#666666"/>
<rect x="697.5" y="709" width="2" height="1" fill="#666666"/>
<rect x="697.5" y="711" width="2" height="1" fill="#666666"/>
<rect x="697.5" y="713" width="2" height="1" fill="#666666"/>
<rect x="697.5" y="715" width="2" height="1" fill="#666666"/>
<path d="M697.3,716.5 L698.5,718 L699.7,716.5 Z" fill="#666666" stroke="none" stroke-width="1"/>
<rect x="694.2" y="706.0" width="2.8" height="1" fill="#666666"/>
<rect x="700.2" y="706.0" width="2.8" height="1" fill="#666666"/>
<rect x="694.2" y="708.0" width="2.8" height="1" fill="#666666"/>
<rect x="700.2" y="708.0" width="2.8" height="1" fill="#666666"/>
<rect x="694.2" y="710.0" width="2.8" height="1" fill="#666666"/>
<rect x="700.2" y="710.0" width="2.8" height="1" fill="#666666"/>
<rect x="694.2" y="712.0" width="2.8" height="1" fill="#666666"/>
<rect x="700.2" y="712.0" width="2.8" height="1" fill="#666666"/>
<rect x="732.5" y="704.5" width="13" height="12" fill="none" stroke="#666666" stroke-width="1"/>
<rect x="734" y="706.5" width="10" height="1" fill="#666666"/>
<rect x="734" y="709.0" width="10" height="1" fill="#666666"/>
<rect x="734" y="711.5" width="10" height="1" fill="#666666"/>
<rect x="734" y="713.7" width="10" height="1" fill="#666666"/>
<path d="M776.8,714.5 H772.5 V704.5 H783.5 V707.6" fill="none" stroke="#666666" stroke-width="1"/>
<rect x="774" y="706.0" width="7.8" height="1" fill="#666666"/>
<rect x="774" y="708.0" width="5.8" height="1" fill="#666666"/>
<rect x="774" y="710.0" width="3.8" height="1" fill="#666666"/>
<rect x="774" y="712.0" width="2.8" height="1" fill="#666666"/>
<circle cx="781.8" cy="712.6" r="3.6" fill="#666666" stroke="#f3f3f3" stroke-width="0.8"/>
<path d="M779.8,711.5 L781.5,714.5 M782.5,711 L784,710.5" fill="none" stroke="#f3f3f3" stroke-width="0.9"/>
<rect x="805" y="710" width="7" height="1" fill="#555555"/>
<rect x="818" y="711" width="100" height="1" fill="#555555"/>
<rect x="861" y="706" width="5" height="11" fill="#666666"/>
<rect x="868" y="707" width="1" height="8" fill="#555555"/>
<rect x="923" y="710.5" width="8" height="1" fill="#555555"/>
<rect x="926.5" y="707" width="1" height="8" fill="#555555"/>
<text x="943.92" y="715" font-size="11" fill="#303030" textLength="21.47" lengthAdjust="spacingAndGlyphs" font-family='"Liberation Sans", sans-serif'>90%</text>
<rect x="0" y="0" width="991" height="1" fill="#8a8a8a"/>
<rect x="0" y="0" width="1" height="723" fill="#7a7a7a"/>
<rect x="990" y="0" width="1" height="723" fill="#7a7a7a"/>
<rect x="0" y="722" width="991" height="1" fill="#7a7a7a"/>
</svg>
</body></html>
